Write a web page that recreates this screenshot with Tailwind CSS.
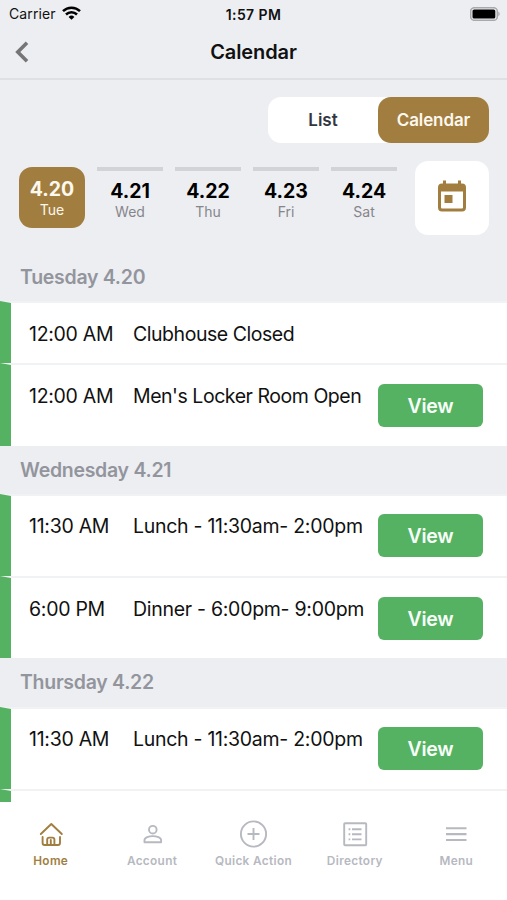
<!DOCTYPE html>
<html lang="en">
<head>
    <meta charset="UTF-8">
    <meta name="viewport" content="width=device-width, initial-scale=1.0">
    <title>Calendar</title>
    <script src="https://cdn.jsdelivr.net/npm/@tailwindcss/browser@4"></script>
</head>
<body class="bg-[#edeef2] font-['Inter',sans-serif] text-[#111] whitespace-nowrap">
    <div class="w-[507px] h-[900px] flex flex-col overflow-hidden">
        <!-- Status bar -->
        <div class="h-[27px] shrink-0 grid grid-cols-3 items-center pl-[9px] pr-[7px] text-[14px]">
            <div class="flex items-center gap-[6px]">
                <span class="tracking-[0.1px]">Carrier</span>
                <svg class="w-[19px] h-[14px] -mt-[2px]" viewBox="0 0 19 14" fill="none" stroke="#000" stroke-width="2.5">
                    <path d="M1 5.2a12.2 12.2 0 0 1 17 0"/>
                    <path d="M4 8.5a7.8 7.8 0 0 1 11 0"/>
                    <path d="M9.5 13.8L6.6 10.9a4.1 4.1 0 0 1 5.8 0z" fill="#000" stroke="none"/>
                </svg>
            </div>
            <div class="pt-px pr-[2px] text-center font-semibold text-[14px] tracking-[0.4px]">1:57 PM</div>
            <svg class="w-[30px] h-[14px] justify-self-end" viewBox="0 0 30 14">
                <rect x="0.7" y="0.7" width="26.6" height="12.6" rx="3.6" fill="none" stroke="#a9a9ac" stroke-width="1.5"/>
                <rect x="2.5" y="2.4" width="22.8" height="9.2" rx="1.6" fill="#000"/>
                <path d="M28.3 4.8c1.8.6 1.8 3.8 0 4.4z" fill="#a9a9ac"/>
            </svg>
        </div>

        <!-- Title bar -->
        <div class="h-[53px] shrink-0 grid grid-cols-3 items-center border-b-2 border-[#dfe0e4] px-[15px] pb-px">
            <svg class="w-[14px] h-[22px]" viewBox="0 0 14 22" fill="none" stroke="#757577" stroke-width="3.6">
                <path d="M12 1.8L2.8 11l9.2 9.2"/>
            </svg>
            <h1 class="text-center text-[20px] font-semibold tracking-[-0.1px]">Calendar</h1>
        </div>

        <!-- List / Calendar switch -->
        <div class="mt-[17px] mr-[18px] self-end flex h-[46px] w-[221px] shrink-0 rounded-[13px] bg-white text-[17px] font-semibold">
            <button class="flex-1 pt-[2px] text-[#33363f]">List</button>
            <button class="w-[111px] rounded-[13px] bg-[#a17e3f] pt-[2px] tracking-[-0.1px] text-[#fdf8ee]">Calendar</button>
        </div>

        <!-- Day picker -->
        <div class="mt-[18px] flex shrink-0 pl-[19px] pr-[18px] text-center">
            <div class="mt-[6px] flex gap-[12px]">
                <div class="h-[61px] w-[66px] rounded-[13px] bg-[#a17e3f] pt-[9px] text-[#fdf8ee]">
                    <div class="text-[19.5px] leading-[26px] font-bold">4.20</div>
                    <div class="text-[14px] leading-[16px]">Tue</div>
                </div>
                <div class="w-[66px] border-t-4 border-[#d2d3d7] pt-[7px]">
                    <div class="text-[19.5px] leading-[26px] font-bold text-black">4.21</div>
                    <div class="text-[14px] leading-[16px] text-[#85868b]">Wed</div>
                </div>
                <div class="w-[66px] border-t-4 border-[#d2d3d7] pt-[7px]">
                    <div class="text-[19.5px] leading-[26px] font-bold text-black">4.22</div>
                    <div class="text-[14px] leading-[16px] text-[#85868b]">Thu</div>
                </div>
                <div class="w-[66px] border-t-4 border-[#d2d3d7] pt-[7px]">
                    <div class="text-[19.5px] leading-[26px] font-bold text-black">4.23</div>
                    <div class="text-[14px] leading-[16px] text-[#85868b]">Fri</div>
                </div>
                <div class="w-[66px] border-t-4 border-[#d2d3d7] pt-[7px]">
                    <div class="text-[19.5px] leading-[26px] font-bold text-black">4.24</div>
                    <div class="text-[14px] leading-[16px] text-[#85868b]">Sat</div>
                </div>
            </div>
            <button class="ml-auto flex h-[74px] w-[74px] items-center justify-center rounded-[13px] bg-white">
                <svg class="-mt-[4px] h-[32px] w-[28px]" viewBox="0 0 28 32" fill="none">
                    <path d="M5 0.5h3v4H5zM20 0.5h3v4h-3z" fill="#a17e3f"/>
                    <rect x="1.5" y="5" width="25" height="25" rx="2.5" stroke="#a17e3f" stroke-width="3"/>
                    <path d="M1.5 5h25v6.5h-25zM6.5 15h8v8h-8z" fill="#a17e3f"/>
                </svg>
            </button>
        </div>

        <!-- Agenda -->
        <div class="min-h-0 flex-1 overflow-hidden text-[19.5px] tracking-[-0.28px]">
            <h2 class="h-[66px] pt-[27px] pl-[20px] leading-[30px] font-semibold text-[#93959d]">Tuesday 4.20</h2>
            <div class="flex h-[62px] border-t-2 border-l-[11px] border-t-[#f1f2f4] border-l-[#56b263] bg-white pt-[16px] pl-[18px] leading-[30px]">
                <div class="w-[104px]">12:00 AM</div>
                <div class="tracking-[-0.46px]">Clubhouse Closed</div>
            </div>
            <div class="flex h-[83px] border-t-2 border-l-[11px] border-t-[#f1f2f4] border-l-[#56b263] bg-white pt-[16px] pl-[18px] leading-[30px]">
                <div class="w-[104px]">12:00 AM</div>
                <div class="tracking-[-0.46px]">Men's Locker Room Open</div>
                <button class="mt-[3px] mr-[24px] ml-auto h-[43px] w-[105px] rounded-[6px] bg-[#56b263] font-semibold text-[#f7fff8]">View</button>
            </div>

            <h2 class="h-[48px] pt-[9px] pl-[20px] leading-[30px] font-semibold text-[#93959d]">Wednesday 4.21</h2>
            <div class="flex h-[82px] border-t-2 border-l-[11px] border-t-[#f1f2f4] border-l-[#56b263] bg-white pt-[15px] pl-[18px] leading-[30px]">
                <div class="w-[104px]">11:30 AM</div>
                <div>Lunch - 11:30am- 2:00pm</div>
                <button class="mt-[3px] mr-[24px] ml-auto h-[43px] w-[105px] rounded-[6px] bg-[#56b263] font-semibold text-[#f7fff8]">View</button>
            </div>
            <div class="flex h-[82px] border-t-2 border-l-[11px] border-t-[#f1f2f4] border-l-[#56b263] bg-white pt-[16px] pl-[18px] leading-[30px]">
                <div class="w-[104px]">6:00 PM</div>
                <div>Dinner - 6:00pm- 9:00pm</div>
                <button class="mt-[3px] mr-[24px] ml-auto h-[43px] w-[105px] rounded-[6px] bg-[#56b263] font-semibold text-[#f7fff8]">View</button>
            </div>

            <h2 class="h-[49px] pt-[9px] pl-[20px] leading-[30px] font-semibold text-[#93959d]">Thursday 4.22</h2>
            <div class="flex h-[82px] border-t-2 border-l-[11px] border-t-[#f1f2f4] border-l-[#56b263] bg-white pt-[15px] pl-[18px] leading-[30px]">
                <div class="w-[104px]">11:30 AM</div>
                <div>Lunch - 11:30am- 2:00pm</div>
                <button class="mt-[3px] mr-[24px] ml-auto h-[43px] w-[105px] rounded-[6px] bg-[#56b263] font-semibold text-[#f7fff8]">View</button>
            </div>
            <div class="h-[82px] border-t-2 border-l-[11px] border-t-[#f1f2f4] border-l-[#56b263] bg-white"></div>
        </div>

        <!-- Tab bar -->
        <nav class="grid h-[98px] shrink-0 grid-cols-5 bg-white pt-[18px] text-center text-[11.8px] font-semibold tracking-[0.35px] text-[#b6b9bf]">
            <a class="flex flex-col items-center text-[#a17e3f]">
                <svg class="h-[28px] w-[28px]" viewBox="0 0 28 28" fill="none" stroke="currentColor" stroke-width="1.9" stroke-linecap="round" stroke-linejoin="round">
                    <path d="M3.8 14L14.3 4l10.5 10"/>
                    <path d="M5.6 17v6q0 2 2 2h2.6v-5.4q0-2 2-2h3.2q2 0 2 2V25H21q2 0 2-2v-6"/>
                    <path d="M10.2 25h7.2M13.8 20v5"/>
                </svg>
                <span class="mt-[5px] leading-[16px]">Home</span>
            </a>
            <a class="flex flex-col items-center">
                <svg class="h-[28px] w-[28px]" viewBox="0 0 28 28" fill="none" stroke="currentColor" stroke-width="1.9">
                    <circle cx="14.8" cy="9.7" r="3.8"/>
                    <path d="M6.5 22.3v-2.2c0-2.7 4.4-4 8.3-4s8.3 1.3 8.3 4v2.2z" stroke-linejoin="round"/>
                </svg>
                <span class="mt-[5px] leading-[16px]">Account</span>
            </a>
            <a class="flex flex-col items-center">
                <svg class="h-[28px] w-[28px]" viewBox="0 0 28 28" fill="none" stroke="currentColor" stroke-width="1.9">
                    <circle cx="14.5" cy="14" r="12.6"/>
                    <path d="M14.5 8v12M8.5 14h12"/>
                </svg>
                <span class="mt-[5px] leading-[16px]">Quick Action</span>
            </a>
            <a class="flex flex-col items-center">
                <svg class="h-[28px] w-[28px]" viewBox="0 0 28 28" fill="none" stroke="currentColor" stroke-width="1.9">
                    <rect x="3.2" y="3.3" width="22" height="22" rx="0.8"/>
                    <path d="M11 9.2h9.5M11 14.3h9.5M11 19.4h9.5M7.6 9.2h1.7M7.6 14.3h1.7M7.6 19.4h1.7"/>
                </svg>
                <span class="mt-[5px] leading-[16px]">Directory</span>
            </a>
            <a class="flex flex-col items-center">
                <svg class="h-[28px] w-[28px]" viewBox="0 0 28 28" fill="none" stroke="currentColor" stroke-width="2.1">
                    <path d="M4 8.2h20.5M4 14.1h20.5M4 20h20.5"/>
                </svg>
                <span class="mt-[5px] leading-[16px]">Menu</span>
            </a>
        </nav>
    </div>
</body>
</html>
